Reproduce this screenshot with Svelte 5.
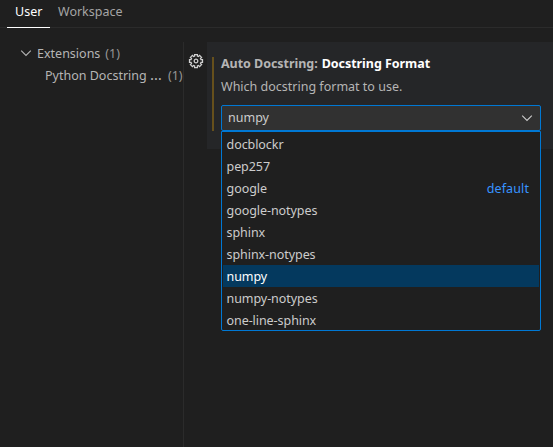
<script>
  const options = [
    { name: 'docblockr' },
    { name: 'pep257' },
    { name: 'google', detail: 'default' },
    { name: 'google-notypes' },
    { name: 'sphinx' },
    { name: 'sphinx-notypes' },
    { name: 'numpy' },
    { name: 'numpy-notypes' },
    { name: 'one-line-sphinx' }
  ];
  const selected = 'numpy';
  const teeth = [0, 45, 90, 135, 180, 225, 270, 315];
</script>

<div class="settings">
  <nav class="tabs">
    <div class="tab active">User</div>
    <div class="tab">Workspace</div>
  </nav>
  <div class="body">
    <aside class="toc">
      <div class="entry group">
        <svg width="12" height="12" viewBox="0 0 12 12"><path d="M1.2 3.7 6 8.5l4.8-4.8" /></svg>
        <span class="label">Extensions</span><span class="count">(1)</span>
      </div>
      <div class="entry child"><span class="label">Python Docstring <span class="ellipsis">…</span></span><span class="count">(1)</span></div>
    </aside>
    <main>
      <div class="gutter">
        <svg class="gear" width="16" height="16" viewBox="-8 -8 16 16">
          {#each teeth as angle}
            <path transform="rotate({angle})" d="M-1.9-4.5-1.4-4.9-1.4-6.5H1.4L1.4-4.9l.5.4" />
          {/each}
          <circle r="1.8" />
        </svg>
      </div>
      <section class="setting">
        <div class="modified"></div>
        <div class="content">
          <div class="title"><span class="category">Auto Docstring:</span><span class="name">Docstring Format</span></div>
          <div class="description">Which docstring format to use.</div>
          <div class="select">
            <span>{selected}</span>
            <svg width="12" height="12" viewBox="0 0 12 12"><path d="M1.2 3.7 6 8.5l4.8-4.8" /></svg>
            <div class="dropdown">
              {#each options as option}
                <div class="option" class:selected={option.name === selected}>
                  <span>{option.name}</span>
                  {#if option.detail}<span class="detail">{option.detail}</span>{/if}
                </div>
              {/each}
            </div>
          </div>
        </div>
      </section>
    </main>
  </div>
</div>

<style>
  :global(body) { background: #1f1f1f; }
  .settings {
    width: 553px;
    height: 447px;
    display: flex;
    flex-direction: column;
    overflow: hidden;
    background: #1f1f1f;
    color: #b5b5b5;
    font: 12.5px/22px "Noto Sans", "Open Sans", sans-serif;
  }
  .tabs {
    height: 28px;
    flex: none;
    display: flex;
    padding-left: 7px;
    box-sizing: border-box;
    box-shadow: inset 0 -1px #2b2b2b;
  }
  .tab { height: 27px; padding: 0 8px; line-height: 24px; color: #a5a5a5; white-space: nowrap; }
  .tab.active { width: 27px; color: #fff; border-bottom: 1px solid #fff; }
  .body { flex: 1; display: flex; padding-top: 14px; }
  .toc { width: 183px; border-right: 1px solid #2b2b2b; flex: none; }
  .entry { display: flex; height: 22px; line-height: 24px; white-space: nowrap; }
  .entry.group { padding-left: 20px; align-items: flex-start; }
  .entry.child { padding-left: 45px; }
  .group svg { margin: 5px 5px 0 0; }
  .ellipsis { display: inline-block; width: 13px; font-size: 15px; line-height: 1; }
  .count { margin-left: 5px; color: #969696; }
  svg { flex: none; fill: none; stroke: #b5b5b5; stroke-width: 1.1; }
  main { flex: 1; display: flex; align-items: flex-start; }
  .gutter { width: 23px; padding: 11px 0 0 4px; box-sizing: border-box; flex: none; }
  .gear { display: block; stroke: #d0d0d0; stroke-width: 1.25; }
  .setting {
    flex: 1;
    height: 107px;
    box-sizing: border-box;
    display: flex;
    padding: 15px 12px 0 5px;
    background: #252628;
  }
  .modified { width: 2px; height: 74px; background: #66501c; margin-right: 7px; }
  .content { width: 320px; }
  .title { display: flex; gap: 4px; height: 22px; line-height: 13px; font-weight: 700; letter-spacing: -0.04px; white-space: nowrap; }
  .name { color: #fff; }
  .description { height: 26px; line-height: 16px; white-space: nowrap; }
  .select {
    position: relative;
    height: 26px;
    box-sizing: border-box;
    border: 1px solid #0078d4;
    border-radius: 2px;
    background: #313131;
    color: #ccc;
    display: flex;
    align-items: center;
    justify-content: space-between;
    padding: 0 7px 0 6px;
  }
  .select > svg { stroke: #ccc; }
  .dropdown {
    position: absolute;
    left: -1px;
    top: 25px;
    width: 320px;
    height: 200px;
    box-sizing: border-box;
    border: 1px solid #0078d4;
    border-radius: 0 0 2px 2px;
    padding: 1px 1px 0;
    overflow: hidden;
    background: #1f1f1f;
  }
  .option { height: 22px; line-height: 24px; padding: 0 10px 0 3.5px; display: flex; justify-content: space-between; letter-spacing: -0.06px; }
  .option.selected { background: #04395e; color: #fff; }
  .detail { color: #3794ff; letter-spacing: 0.1px; }
</style>
